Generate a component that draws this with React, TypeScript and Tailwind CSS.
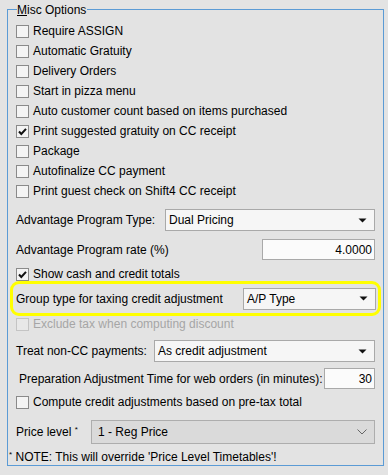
import React from "react";

const font = { fontFamily: '"Liberation Sans", Arial, sans-serif' };

function Check({ checked = false, disabled = false }: { checked?: boolean; disabled?: boolean }) {
  return (
    <span
      className={`relative inline-block w-[13px] h-[13px] border shrink-0 ${
        disabled ? "border-[#c4c4c4] bg-[#e8e8e8]" : "border-[#8a8a8a] bg-[#f4f4f4]"
      }`}
    >
      {checked && (
        <svg width="11" height="11" viewBox="0 0 11 11" className="absolute left-0 top-0">
          <path d="M2 5.5 L4.3 8 L9 2.8" fill="none" stroke="#111" strokeWidth="2" />
        </svg>
      )}
    </span>
  );
}

function CheckRow({ label, checked = false, disabled = false }: { label: string; checked?: boolean; disabled?: boolean }) {
  return (
    <div className="h-[20px] flex items-center gap-[4px]">
      <Check checked={checked} disabled={disabled} />
      <span className={disabled ? "text-[#a6a6a6]" : "text-[#000]"}>{label}</span>
    </div>
  );
}

function Arrow() {
  return (
    <svg width="9" height="5" viewBox="0 0 9 5" className="shrink-0">
      <path d="M0.5 0.5 H8.5 L4.5 4.5 Z" fill="#111" />
    </svg>
  );
}

function Combo({ value, className }: { value: string; className: string }) {
  return (
    <div className={`h-[22px] border border-[#a9a9a9] bg-[#f6f6f6] flex items-center justify-between pl-[3px] pr-[7px] ${className}`}>
      <span>{value}</span>
      <Arrow />
    </div>
  );
}

export default function App() {
  return (
    <div className="w-[388px] h-[475px] bg-[#e3e3e3] pt-[9px] pl-[7px] text-[12px] leading-[14px] text-black" style={font}>
      <div className="relative w-[377px] h-[457px] border border-[#5b9bd5] px-[8px] pt-[11px]">
        <div className="absolute left-[9px] top-[-8px] bg-[#e3e3e3] pr-[1px] h-[16px] flex items-center">
          <span>
            <span className="underline">M</span>isc Options
          </span>
        </div>
        <div className="flex flex-col">
          <CheckRow label="Require ASSIGN" />
          <CheckRow label="Automatic Gratuity" />
          <CheckRow label="Delivery Orders" />
          <CheckRow label="Start in pizza menu" />
          <CheckRow label="Auto customer count based on items purchased" />
          <CheckRow label="Print suggested gratuity on CC receipt" checked />
          <CheckRow label="Package" />
          <CheckRow label="Autofinalize CC payment" />
          <CheckRow label="Print guest check on Shift4 CC receipt" />

          <div className="mt-[8px] h-[22px] flex items-center justify-between">
            <span>Advantage Program Type:</span>
            <Combo value="Dual Pricing" className="w-[210px]" />
          </div>

          <div className="mt-[8px] h-[21px] flex items-center justify-between">
            <span>Advantage Program rate (%)</span>
            <div className="w-[113px] h-[21px] border border-[#a9a9a9] bg-[#fbfbfb] flex items-center justify-end pr-[2px]">
              4.0000
            </div>
          </div>

          <div className="mt-[4px]">
            <CheckRow label="Show cash and credit totals" checked />
          </div>

          <div className="-mx-[6px] mt-[-3px] h-[35px] border-[3px] border-[#ffff00] rounded-[9px] flex items-center justify-between pl-[3px] pr-[2px]">
            <span>Group type for taxing credit adjustment</span>
            <Combo value="A/P Type" className="w-[133px]" />
          </div>

          <div className="mt-[-2px]">
            <CheckRow label="Exclude tax when computing discount" disabled />
          </div>

          <div className="mt-[6px] h-[22px] flex items-center justify-between">
            <span>Treat non-CC payments:</span>
            <Combo value="As credit adjustment" className="w-[221px]" />
          </div>

          <div className="mt-[6px] h-[21px] flex items-center justify-between">
            <span className="pl-[3px]">Preparation Adjustment Time for web orders (in minutes):</span>
            <div className="w-[51px] h-[21px] border border-[#a9a9a9] bg-[#fbfbfb] flex items-center justify-end pr-[2px]">
              30
            </div>
          </div>

          <div className="mt-[3px]">
            <CheckRow label="Compute credit adjustments based on pre-tax total" />
          </div>

          <div className="mt-[8px] h-[24px] flex items-center justify-between">
            <span>
              Price level <sup className="text-[8px]">*</sup>
            </span>
            <div className="w-[284px] h-[24px] border border-[#adadad] bg-[#dadada] flex items-center justify-between pl-[6px] pr-[7px]">
              <span>1 - Reg Price</span>
              <svg width="10" height="6" viewBox="0 0 10 6">
                <path d="M0.5 0.5 L5 5 L9.5 0.5" fill="none" stroke="#666" strokeWidth="1" />
              </svg>
            </div>
          </div>

          <div className="mt-[5px] -ml-[7px] h-[16px] flex items-center">
            <span>
              <sup className="text-[8px]">*</sup> NOTE: This will override 'Price Level Timetables'!
            </span>
          </div>
        </div>
      </div>
    </div>
  );
}
